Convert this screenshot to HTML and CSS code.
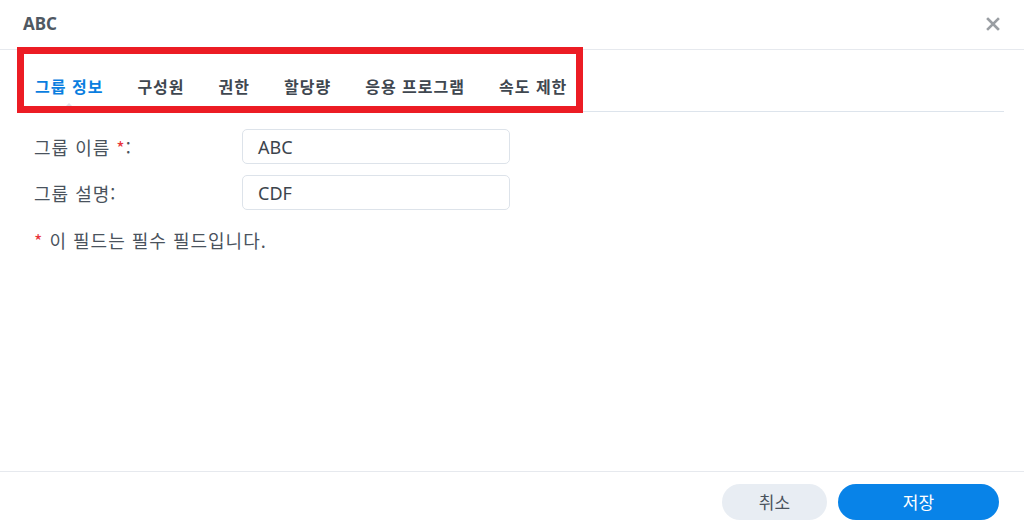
FILE: index.html
```html
<!DOCTYPE html>
<html lang="ko">
<head>
<meta charset="utf-8">
<link rel="stylesheet" href="styles.css">
</head>
<body>
<div class="dialog">
  <header class="head">
    <div class="title">ABC</div>
    <button class="close" aria-label="close">
      <svg width="14" height="14" viewBox="0 0 14 14"><path d="M2 2L12 12M12 2L2 12" stroke="#9a9ea3" stroke-width="2.6" stroke-linecap="square"/></svg>
    </button>
  </header>
  <nav class="tabs">
    <span class="tab active">그룹 정보<i class="caret"></i></span>
    <span class="tab">구성원</span>
    <span class="tab">권한</span>
    <span class="tab">할당량</span>
    <span class="tab">응용 프로그램</span>
    <span class="tab">속도 제한</span>
  </nav>
  <main class="form">
    <div class="row">
      <label class="label">그룹 이름 <span class="req">*</span>:</label>
      <div class="input">ABC</div>
    </div>
    <div class="row">
      <label class="label">그룹 설명:</label>
      <div class="input">CDF</div>
    </div>
    <p class="note"><span class="req">*</span> 이 필드는 필수 필드입니다.</p>
  </main>
  <footer class="foot">
    <button class="btn cancel">취소</button>
    <button class="btn save">저장</button>
  </footer>
  <div class="annot"></div>
</div>
</body>
</html>
```
FILE: styles.css
```css
html, body {
  margin: 0;
  padding: 0;
  background: #fff;
}
body {
  font-family: "Noto Sans", "Noto Sans CJK KR", sans-serif;
  color: #414b55;
}
.dialog {
  position: relative;
  width: 1024px;
  height: 531px;
  display: flex;
  flex-direction: column;
  overflow: hidden;
}
.head {
  height: 50px;
  box-sizing: border-box;
  border-bottom: 1px solid #e6e9ee;
  display: flex;
  align-items: center;
  justify-content: space-between;
  padding: 0 24px 0 23px;
}
.title {
  font-size: 17px;
  font-weight: 700;
  color: #4f5862;
  margin-top: -2px;
}
.close {
  border: 0;
  background: none;
  padding: 0;
  width: 14px;
  height: 14px;
  display: flex;
  margin-top: -2px;
}
.tabs {
  margin: 0 20px;
  height: 62px;
  box-sizing: border-box;
  border-bottom: 1px solid #dde4ec;
  display: flex;
  align-items: center;
  gap: 34px;
  padding: 11px 0 0 15px;
}
.tab {
  position: relative;
  font-size: 16px;
  font-weight: 700;
  letter-spacing: 1px;
  color: #3f4750;
  font-family: "Noto Sans CJK KR", sans-serif;
}
.tab.active {
  color: #0a7ee0;
}
.caret {
  position: absolute;
  left: 30px;
  top: 29px;
  width: 0;
  height: 0;
  border-left: 4px solid transparent;
  border-right: 4px solid transparent;
  border-bottom: 4px solid #dfe4ea;
}
.form {
  flex: 1;
  padding: 17px 0 0 34px;
  display: flex;
  flex-direction: column;
  gap: 11px;
}
.row {
  display: flex;
  align-items: center;
}
.label {
  width: 208px;
  font-size: 18px;
  letter-spacing: 1px;
  color: #4a535d;
  font-family: "Noto Sans CJK KR", sans-serif;
}
.req {
  color: #e8343a;
}
.input {
  width: 268px;
  height: 35px;
  box-sizing: border-box;
  border: 1px solid #dde3ea;
  border-radius: 5px;
  padding: 0 15px;
  display: flex;
  align-items: center;
  font-size: 18px;
  color: #3c444d;
}
.note {
  margin: 6px 0 0;
  font-size: 18px;
  letter-spacing: 1px;
  color: #4a535d;
  font-family: "Noto Sans CJK KR", sans-serif;
}
.foot {
  height: 60px;
  box-sizing: border-box;
  border-top: 1px solid #e6e9ee;
  display: flex;
  align-items: center;
  justify-content: flex-end;
  gap: 11px;
  padding: 0 25px 0 0;
}
.btn {
  height: 36px;
  border: 0;
  border-radius: 18px;
  font-size: 17px;
  font-family: "Noto Sans CJK KR", sans-serif;
  padding: 0;
}
.cancel {
  width: 105px;
  background: #e8edf3;
  color: #4a535d;
}
.save {
  width: 161px;
  background: #0883e8;
  color: #fff;
}
.annot {
  position: absolute;
  left: 17px;
  top: 47px;
  width: 566px;
  height: 66px;
  box-sizing: border-box;
  border: 7px solid #ec1c24;
  pointer-events: none;
}
```
